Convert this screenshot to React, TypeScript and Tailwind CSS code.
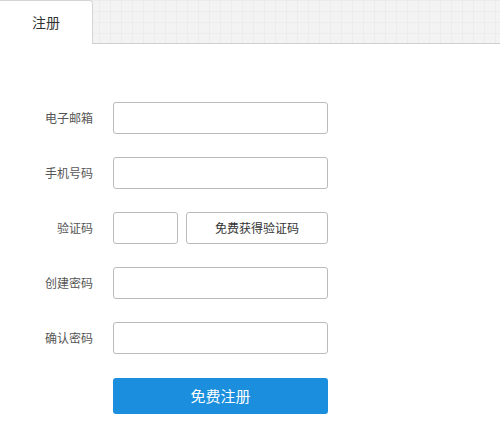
import React from "react";

const font = { fontFamily: '"Noto Sans CJK SC", "Noto Sans", sans-serif' };

function Row({ label, children }: { label: string; children: React.ReactNode }) {
  return (
    <div className="flex items-center h-[32px]">
      <div className="w-[93px] text-right text-[12px] text-[#555] pr-0">{label}</div>
      <div className="ml-[20px] flex">{children}</div>
    </div>
  );
}

function Input({ w }: { w: string }) {
  return <input className={`${w} h-[32px] border border-[#bbb] rounded-[3px] bg-white outline-none`} />;
}

export default function App() {
  return (
    <div className="w-[500px] h-[436px] bg-white" style={font}>
      <div className="h-[44px] flex border-b border-[#cfcfcf] bg-[#f3f3f3] bg-[linear-gradient(#ececec_1px,transparent_1px),linear-gradient(90deg,#ececec_1px,transparent_1px)] bg-[size:11px_11px]">
        <div className="w-[93px] h-[44px] bg-white border-r border-t border-[#d5d5d5] rounded-tr-[4px] -mb-px flex items-center justify-center text-[14px] text-[#333]">
          注册
        </div>
      </div>
      <div className="pt-[58px] flex flex-col gap-[23px]">
        <Row label="电子邮箱"><Input w="w-[215px]" /></Row>
        <Row label="手机号码"><Input w="w-[215px]" /></Row>
        <Row label="验证码">
          <Input w="w-[65px]" />
          <button className="ml-[8px] w-[142px] h-[32px] border border-[#bbb] rounded-[3px] bg-white text-[12px] text-[#333]">
            免费获得验证码
          </button>
        </Row>
        <Row label="创建密码"><Input w="w-[215px]" /></Row>
        <Row label="确认密码"><Input w="w-[215px]" /></Row>
        <div className="flex pl-[113px] mt-[1px]">
          <button className="w-[215px] h-[36px] rounded-[3px] bg-[#1b8fdd] text-white text-[15px]">免费注册</button>
        </div>
      </div>
    </div>
  );
}
